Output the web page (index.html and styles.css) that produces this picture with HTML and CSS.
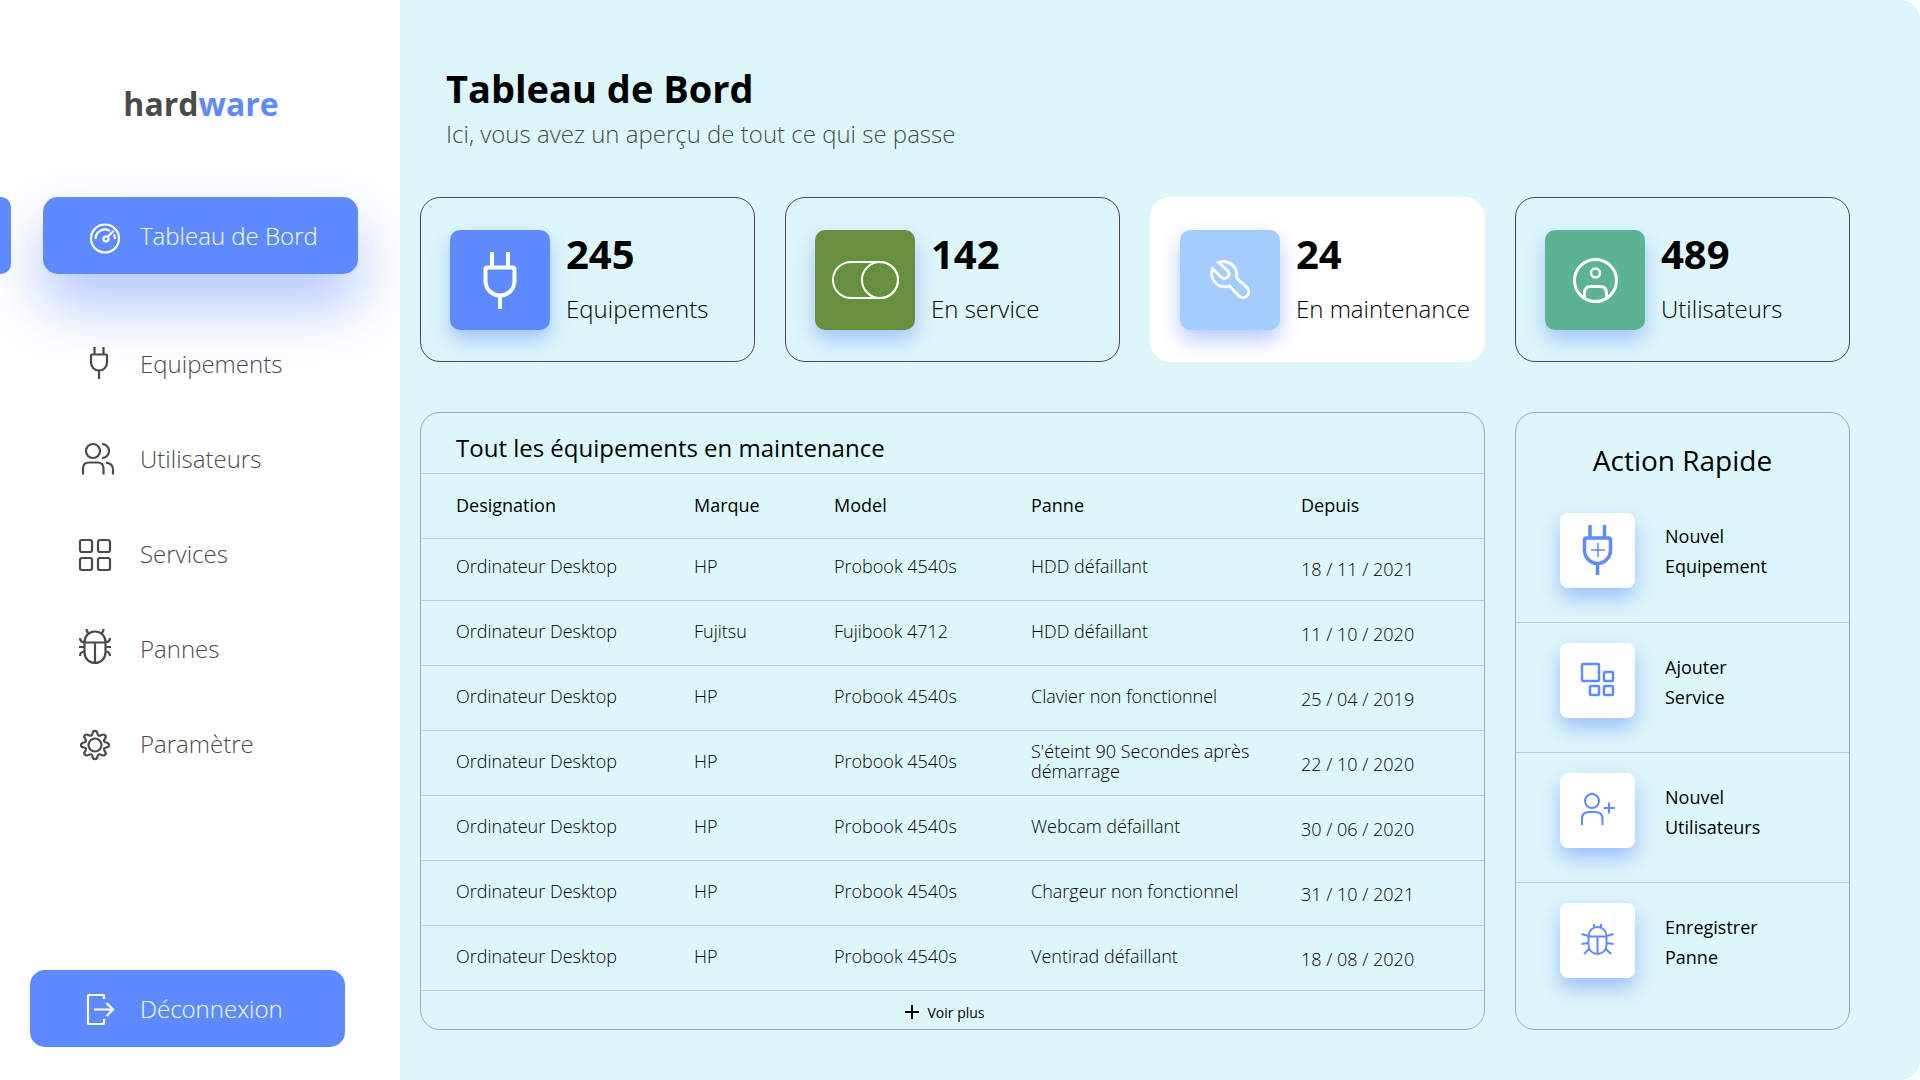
FILE: index.html
```html
<!DOCTYPE html>
<html lang="fr">
<head>
<meta charset="utf-8">
<meta name="viewport" content="width=device-width, initial-scale=1">
<title>hardware - Tableau de Bord</title>
<link rel="stylesheet" href="styles.css">
</head>
<body>
<div class="app">
  <aside class="sidebar">
    <div class="logo">hard<span class="logo-accent">ware</span></div>
    <nav class="nav">
      <a class="nav-link active" href="#">
        <svg class="nav-icon" viewBox="0 0 48 48"><circle cx="30" cy="26.500" r="14"/><path d="M20.500 27A9.500 9.500 0 0 1 35 19M39 22.500a9 9 0 0 1 1 4.500M32.500 25l6-6"/><circle cx="31" cy="27" r="2.500"/></svg>
        <span>Tableau de Bord</span>
      </a>
      <a class="nav-link" href="#">
        <svg class="nav-icon" viewBox="0 0 48 48"><path d="M19.500 7v8M28.500 7v8M17 14.500h14q1 0 1 1v7a8 8 0 0 1-16 0v-7q0-1 1-1zM24 31v8"/></svg>
        <span>Equipements</span>
      </a>
      <a class="nav-link" href="#">
        <svg class="nav-icon" viewBox="0 0 48 48"><circle cx="18" cy="16" r="7"/><path d="M8 39.500v-6q0-6 6-6h8.500q6 0 6 6v6M27 9a7 7 0 0 1 0 14M31 27.500q7 1 7 7v5"/></svg>
        <span>Utilisateurs</span>
      </a>
      <a class="nav-link" href="#">
        <svg class="nav-icon" viewBox="0 0 48 48"><rect x="5" y="10" width="12" height="12" rx="2"/><rect x="23" y="10" width="12" height="12" rx="2"/><rect x="5" y="28" width="12" height="12" rx="2"/><rect x="23" y="28" width="12" height="12" rx="2"/></svg>
        <span>Services</span>
      </a>
      <a class="nav-link" href="#">
        <svg class="nav-icon" viewBox="0 0 48 48"><path d="M9.500 17a10.500 10.500 0 0 1 21 0v10.500a10.500 10.500 0 0 1-21 0zM9.500 17.500h21M20 17.500V38M11.500 4q0 3 2.500 4.500M28.500 4q0 3-2.500 4.500M5 13q0 4 4.500 4.500M35 13q0 4-4.500 4.500M4 22h5.500M36 22h-5.500M5 31q0-4 4.500-4.500M35 31q0-4-4.500-4.500"/></svg>
        <span>Pannes</span>
      </a>
      <a class="nav-link" href="#">
        <svg class="nav-icon" viewBox="0 0 48 48"><circle cx="20" cy="25" r="6.500"/><path d="M17.500 13.500C18 10 22 10 22.500 13.500C23 16.500 24.500 16 26.500 15C29.500 13.500 32 16 30 18.500C28.500 20.500 28.500 22 31 22.500C35 23 35 27 31 27.500C28.500 28 28.500 29.500 30 31.500C32 34 29.500 36.500 26.500 35C24.500 34 23 33.500 22.500 36.500C22 40 18 40 17.500 36.500C17 33.500 15.500 34 13.500 35C10.500 36.500 8 34 10 31.500C11.500 29.500 11.500 28 9 27.500C5 27 5 23 9 22.500C11.500 22 11.500 20.500 10 18.500C8 16 10.500 13.500 13.500 15C15.500 16 17 16.500 17.500 13.500z"/></svg>
        <span>Paramètre</span>
      </a>
    </nav>
    <button class="logout" type="button">
      <svg class="nav-icon" viewBox="0 0 48 48"><path d="M29 14V11q0-1-1-1H14q-1 0-1 1v27q0 1 1 1h14q1 0 1-1v-4M19 24.500h19M31.500 18l6.500 6.500-6.500 6.500"/></svg>
      <span>Déconnexion</span>
    </button>
  </aside>

  <main class="main">
    <header class="page-head">
      <h1 class="page-title">Tableau de Bord</h1>
      <p class="page-subtitle">Ici, vous avez un aperçu de tout ce qui se passe</p>
    </header>

    <section class="grid">
      <article class="stat">
        <svg class="stat-icon blue" viewBox="0 0 100 100"><path d="M42 22v14M58 22v14M37 37.500h26q1.500 0 1.500 1.500v12a14.500 14.500 0 0 1-29 0V39q0-1.500 1.500-1.500zM50 66v13" stroke-width="4"/></svg>
        <div><p class="stat-value">245</p><p class="stat-label">Equipements</p></div>
      </article>
      <article class="stat">
        <svg class="stat-icon green" viewBox="0 0 100 100"><rect x="18" y="32" width="65" height="36" rx="18" stroke-width="2"/><circle cx="65" cy="50" r="18" stroke-width="2"/></svg>
        <div><p class="stat-value">142</p><p class="stat-label">En service</p></div>
      </article>
      <article class="stat highlighted">
        <svg class="stat-icon sky" viewBox="0 0 100 100"><path d="M38.500 32.500L47.500 40.500Q50.500 44 48 46.800Q44.500 50 41 47L32.500 38.500A13.500 13.500 0 0 0 49.500 56L58.500 65.500A5.500 5.500 0 0 0 67.500 58L56.500 48A13.500 13.500 0 0 0 38.500 32.500z" stroke-width="2.800"/></svg>
        <div><p class="stat-value">24</p><p class="stat-label">En maintenance</p></div>
      </article>
      <article class="stat">
        <svg class="stat-icon teal" viewBox="0 0 100 100"><circle cx="50.500" cy="50.500" r="21" stroke-width="3"/><circle cx="50.500" cy="43" r="4.500" stroke-width="2.500"/><path d="M39.500 68v-5q0-6.500 6.500-6.500h9q6.500 0 6.500 6.500v5" stroke-width="3"/></svg>
        <div><p class="stat-value">489</p><p class="stat-label">Utilisateurs</p></div>
      </article>

      <section class="panel maintenance">
        <h2 class="panel-title">Tout les équipements en maintenance</h2>
        <table class="table">
          <colgroup><col class="col-name"><col class="col-brand"><col class="col-model"><col class="col-fault"><col></colgroup>
          <thead><tr><th>Designation</th><th>Marque</th><th>Model</th><th>Panne</th><th>Depuis</th></tr></thead>
          <tbody>
            <tr><td>Ordinateur Desktop</td><td>HP</td><td>Probook 4540s</td><td>HDD défaillant</td><td class="date">18 / 11 / 2021</td></tr>
            <tr><td>Ordinateur Desktop</td><td>Fujitsu</td><td>Fujibook 4712</td><td>HDD défaillant</td><td class="date">11 / 10 / 2020</td></tr>
            <tr><td>Ordinateur Desktop</td><td>HP</td><td>Probook 4540s</td><td>Clavier non fonctionnel</td><td class="date">25 / 04 / 2019</td></tr>
            <tr><td>Ordinateur Desktop</td><td>HP</td><td>Probook 4540s</td><td>S'éteint 90 Secondes après démarrage</td><td class="date">22 / 10 / 2020</td></tr>
            <tr><td>Ordinateur Desktop</td><td>HP</td><td>Probook 4540s</td><td>Webcam défaillant</td><td class="date">30 / 06 / 2020</td></tr>
            <tr><td>Ordinateur Desktop</td><td>HP</td><td>Probook 4540s</td><td>Chargeur non fonctionnel</td><td class="date">31 / 10 / 2021</td></tr>
            <tr><td>Ordinateur Desktop</td><td>HP</td><td>Probook 4540s</td><td>Ventirad défaillant</td><td class="date">18 / 08 / 2020</td></tr>
          </tbody>
        </table>
        <button class="more" type="button">
          <svg class="more-icon" viewBox="0 0 14 14"><path d="M7 0v14M0 7h14"/></svg>
          <span>Voir plus</span>
        </button>
      </section>

      <section class="panel">
        <h2 class="actions-title">Action Rapide</h2>
        <button class="action" type="button">
          <svg class="action-icon" viewBox="0 0 75 75"><path d="M30 12v13M44.500 12v13M26.500 25h22q2 0 2 2v10a12.500 13 0 0 1-26 0V27q0-2 2-2zM37.500 50v12" stroke-width="3.500"/><path d="M38 30v14M31 37h14" stroke-width="1.500"/></svg>
          <span>Nouvel<br>Equipement</span>
        </button>
        <button class="action" type="button">
          <svg class="action-icon" viewBox="0 0 75 75"><rect x="22" y="21" width="17" height="17" rx="1" stroke-width="2.500"/><rect x="44" y="29" width="9" height="9" rx="1" stroke-width="2.500"/><rect x="30" y="43" width="9" height="9" rx="1" stroke-width="2.500"/><rect x="44" y="43" width="9" height="9" rx="1" stroke-width="2.500"/></svg>
          <span>Ajouter<br>Service</span>
        </button>
        <button class="action" type="button">
          <svg class="action-icon" viewBox="0 0 75 75"><circle cx="32" cy="28" r="7"/><path d="M22 52v-6q0-7 7-7h6.500q7 0 7 7v6M49 29.500v11M43.500 35H55"/></svg>
          <span>Nouvel<br>Utilisateurs</span>
        </button>
        <button class="action" type="button">
          <svg class="action-icon" viewBox="0 0 75 75"><path d="M28.500 33a9 9 0 0 1 18 0v9a9 9 0 0 1-18 0zM28.500 33.500h18M37.500 33.500V51M34 21v3.500M41 21v3.500M21.500 31l7 2M53.500 31l-7 2M21.500 41l7-1M53.500 41l-7-1M24 51l6-6M51 51l-6-6"/></svg>
          <span>Enregistrer<br>Panne</span>
        </button>
      </section>
    </section>
  </main>
</div>
</body>
</html>
```
FILE: styles.css
```css
* { box-sizing: border-box; }

body {
  margin: 0;
  background: #fff;
  color: #000;
  font-family: "Open Sans", "Noto Sans", sans-serif;
  font-weight: 300;
}

h1, h2, p { margin: 0; }

button {
  border: 0;
  padding: 0;
  background: none;
  color: inherit;
  font: inherit;
  text-align: left;
  cursor: pointer;
}

svg { flex: none; fill: none; stroke: currentColor; stroke-width: 2; }

.app { display: flex; min-height: 100vh; }

/* Sidebar */
.sidebar {
  position: relative;
  display: flex;
  flex: none;
  flex-direction: column;
  width: 400px;
  padding: 80px 0 33px;
  color: #4a4a4a;
}

.logo {
  padding-left: 2px;
  margin-bottom: 69px;
  font-size: 32px;
  font-weight: 700;
  line-height: 48px;
  text-align: center;
}

.logo-accent { color: #5d8aff; }

.nav { padding: 0 42px 0 43px; }

.nav-link, .logout {
  display: flex;
  align-items: center;
  gap: 17px;
  font-size: 24px;
  line-height: 36px;
}

.nav-link {
  height: 95px;
  padding-left: 32px;
  color: inherit;
  text-decoration: none;
}

.nav-icon { width: 48px; height: 48px; stroke-width: 2.2; }

.nav-link.active, .logout {
  height: 77px;
  border-radius: 15px;
  background: #5d8aff;
  color: #fff;
}

.nav-link.active {
  margin-bottom: 42px;
  box-shadow: 0 30px 60px rgba(93, 138, 255, 0.5);
}

/* Marker on the window edge, level with the current entry */
.nav-link.active::before {
  content: "";
  position: absolute;
  left: 0;
  width: 11px;
  height: 77px;
  border-radius: 0 10px 10px 0;
  background: #5d8aff;
}

.logout {
  width: 315px;
  margin: auto 0 0 30px;
  padding-left: 45px;
}

/* Main area */
.main {
  position: relative;
  flex: 1;
  min-width: 0;
  padding: 60px 70px 50px 20px;
  border-radius: 0 20px 20px 0;
  background: #ddf6fa;
}

.page-head { height: 137px; padding-left: 26px; }

.page-title { font-size: 38px; font-weight: 700; line-height: 56px; }

.page-subtitle { color: #4a4a4a; font-size: 24px; line-height: 36px; }

.grid {
  display: grid;
  grid-template-columns: repeat(4, minmax(0, 1fr));
  gap: 50px 30px;
}

.stat {
  display: flex;
  gap: 16px;
  height: 165px;
  padding: 32px 0 0 29px;
  border: 1px solid #4a4a4a;
  border-radius: 20px;
  white-space: nowrap;
}

.stat.highlighted { border-color: #fff; background: #fff; }

.stat-icon {
  width: 100px;
  height: 100px;
  border-radius: 10px;
  box-shadow: 0 10px 20px rgba(93, 138, 255, 0.45);
  color: #fff;
}

.blue { background: #5d8aff; }
.green { background: #678f40; }
.sky { background: #a5ccff; }
.teal { background: #5bb391; }

.stat-value { font-size: 40px; font-weight: 700; line-height: 48px; }

.stat-label { margin-top: 11px; font-size: 24px; line-height: 40px; }

.panel {
  border: 1px solid #9aadb0;
  border-radius: 20px;
}

.maintenance { grid-column: span 3; }

.panel-title {
  padding: 17px 35px 7px;
  font-size: 24px;
  font-weight: 400;
  line-height: 36px;
}

.table {
  width: 100%;
  border-collapse: collapse;
  table-layout: fixed;
  font-size: 18px;
  line-height: 20px;
}

.col-name { width: 273px; }
.col-brand { width: 140px; }
.col-model { width: 197px; }
.col-fault { width: 270px; }

.table tr { height: 65px; border: solid #bacdd1; border-width: 1px 0; }
.table tbody tr:first-child { height: 62px; }

.table th, .table td {
  padding: 0 10px 4px 0;
  font-weight: inherit;
  text-align: left;
}

.table th { padding-bottom: 2px; font-weight: 400; }
.table th:first-child, .table td:first-child { padding-left: 35px; }
.table .date { padding: 2px 0 0; }
.table tbody tr:first-child td { padding-bottom: 8px; }
.table tbody tr:first-child .date { padding-bottom: 4px; }

.more {
  display: flex;
  align-items: center;
  justify-content: center;
  gap: 8px;
  width: 100%;
  height: 38px;
  padding: 4px 15px 0 0;
  font-size: 14px;
  font-weight: 400;
}

.more-icon { width: 14px; height: 14px; }

.actions-title {
  height: 79px;
  padding-top: 25px;
  font-size: 28px;
  font-weight: 400;
  line-height: 44px;
  text-align: center;
}

.action {
  display: flex;
  align-items: center;
  gap: 30px;
  width: 100%;
  height: 130px;
  padding: 0 0 14px 44px;
  font-size: 18px;
  font-weight: 400;
  line-height: 30px;
}

.action span { padding-top: 2px; }

.action + .action { border-top: 1px solid #bacdd1; }

.action-icon {
  width: 75px;
  height: 75px;
  border-radius: 8px;
  background: #fff;
  box-shadow: 0 10px 20px rgba(93, 138, 255, 0.5);
  color: #5d8aff;
}
```
